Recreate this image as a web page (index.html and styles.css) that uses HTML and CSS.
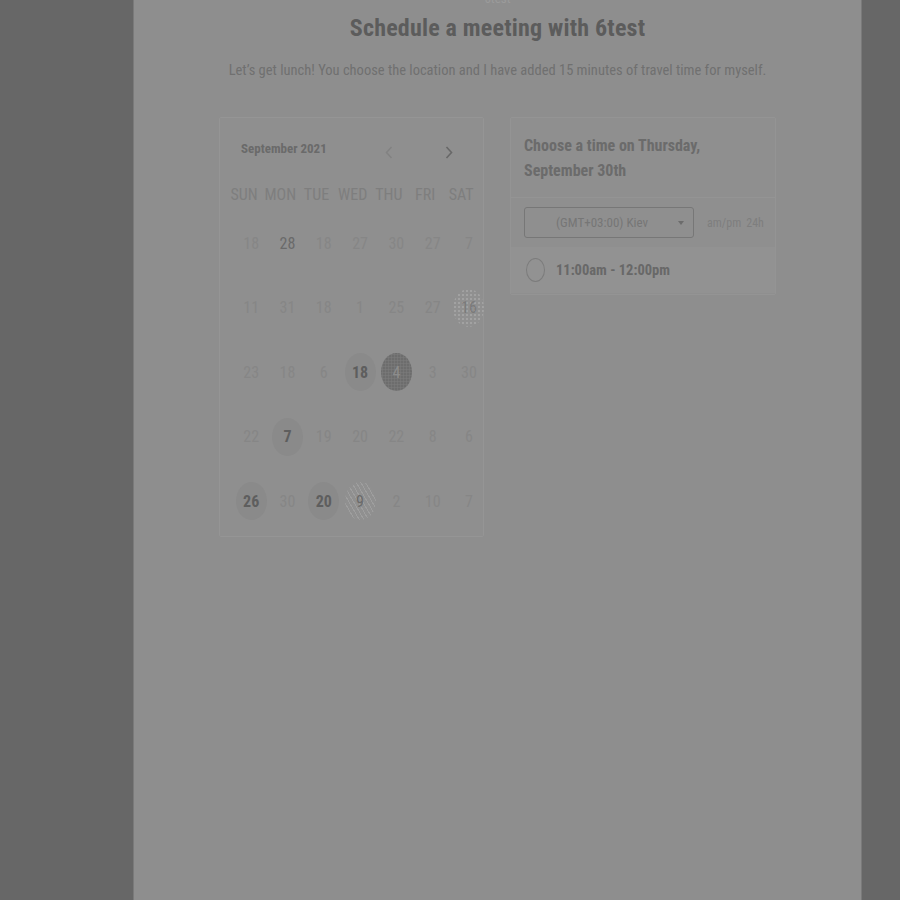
FILE: index.html
```html
<!DOCTYPE html>
<html>
<head>
<meta charset="utf-8">
<link rel="stylesheet" href="styles.css">
</head>
<body>
<div class="panel">
  <div class="top-name"><span>6test</span></div>
  <h1 class="title">Schedule a meeting with 6test</h1>
  <p class="subtitle">Let’s get lunch! You choose the location and I have added 15 minutes of travel time for myself.</p>

  <div class="row">
    <div class="cal">
      <div class="cal-head">
        <span class="month">September 2021</span>
        <div class="cal-nav">
          <svg class="arrow prev" width="8" height="13" viewBox="0 0 8 13"><path d="M6.5 1 L1.5 6.5 L6.5 12" fill="none" stroke="currentColor" stroke-width="1.5"/></svg>
          <svg class="arrow next" width="8" height="13" viewBox="0 0 8 13"><path d="M1.5 1 L6.5 6.5 L1.5 12" fill="none" stroke="currentColor" stroke-width="1.6"/></svg>
        </div>
      </div>
      <div class="dows">
        <span>Sun</span><span>Mon</span><span>Tue</span><span>Wed</span><span>Thu</span><span>Fri</span><span>Sat</span>
      </div>
      <div class="dates">
        <span class="d">18</span><span class="d strong">28</span><span class="d">18</span><span class="d">27</span><span class="d">30</span><span class="d">27</span><span class="d">7</span>
        <span class="d">11</span><span class="d">31</span><span class="d">18</span><span class="d">1</span><span class="d">25</span><span class="d">27</span><span class="d"><b class="dot dotted">16</b></span>
        <span class="d">23</span><span class="d">18</span><span class="d">6</span><span class="d"><b class="dot">18</b></span><span class="d"><b class="dot dark">4</b></span><span class="d">3</span><span class="d">30</span>
        <span class="d">22</span><span class="d"><b class="dot">7</b></span><span class="d">19</span><span class="d">20</span><span class="d">22</span><span class="d">8</span><span class="d">6</span>
        <span class="d"><b class="dot">26</b></span><span class="d">30</span><span class="d"><b class="dot">20</b></span><span class="d"><b class="dot striped">9</b></span><span class="d">2</span><span class="d">10</span><span class="d">7</span>
      </div>
    </div>

    <div class="times">
      <div class="times-head">Choose a time on Thursday, September 30th</div>
      <div class="times-body">
        <div class="tz-row">
          <div class="select"><span>(GMT+03:00) Kiev</span><i class="caret"></i></div>
          <div class="fmt"><span>am/pm</span><span>24h</span></div>
        </div>
        <div class="slot">
          <i class="radio"></i>
          <span class="slot-text">11:00am - 12:00pm</span>
        </div>
      </div>
    </div>
  </div>
</div>
</body>
</html>
```

FILE: styles.css
```css
* { box-sizing: border-box; }
html, body {
  margin: 0;
  padding: 0;
  background: #676767;
  font-family: "Roboto Condensed", Roboto, sans-serif;
}
.panel {
  margin-left: 133px;
  width: 729px;
  min-height: 900px;
  background: #8e8e8e;
  border-left: 1px solid #7a7a7a;
  border-right: 1px solid #7a7a7a;
}
.top-name {
  height: 5px;
  overflow: hidden;
  text-align: center;
}
.top-name span {
  display: block;
  font-size: 13px;
  line-height: 13px;
  margin-top: -8px;
  color: #9b9b9b;
}
.title {
  margin: 8px 0 0;
  font-size: 24px;
  line-height: 30px;
  font-weight: 700;
  letter-spacing: 0.2px;
  text-align: center;
  color: #5c5c5c;
}
.subtitle {
  margin: 18px 0 0;
  font-size: 14.5px;
  line-height: 20px;
  text-align: center;
  color: #707070;
}
.row {
  display: flex;
  justify-content: center;
  align-items: flex-start;
  gap: 26px;
  margin-top: 36px;
}
.cal {
  width: 265px;
  height: 420px;
  border: 1px solid #959595;
  border-radius: 2px;
  background: #8f8f8f;
}
.cal-head {
  display: flex;
  align-items: center;
  height: 18px;
  margin-top: 21px;
  padding-left: 21px;
}
.month {
  font-size: 13px;
  font-weight: 700;
  color: #6a6a6a;
}
.cal-nav {
  margin-left: auto;
  display: flex;
  gap: 52px;
  padding-right: 30px;
  margin-top: 8px;
}
.arrow { display: block; }
.arrow.prev { color: #828282; }
.arrow.next { color: #686868; }
.dows {
  display: grid;
  grid-template-columns: repeat(7, 36.2px);
  margin: 28px 0 0 6px;
  line-height: 20px;
  font-size: 16px;
  text-transform: uppercase;
  text-align: center;
  color: #7e7e7e;
}
.dates {
  display: grid;
  grid-template-columns: repeat(7, 36.3px);
  grid-auto-rows: 64.5px;
  margin: 6px 0 0 13px;
}
.d {
  display: flex;
  align-items: center;
  justify-content: center;
  font-size: 16px;
  color: #868686;
}
.d.strong { color: #6a6a6a; }
.dot {
  display: flex;
  align-items: center;
  justify-content: center;
  width: 31px;
  height: 38px;
  border-radius: 50%;
  background: #8a8a8a;
  color: #5e5e5e;
  font-weight: 700;
}
.dot.dark {
  background: #6d6d6d;
  background-image: radial-gradient(#797979 0.8px, transparent 1.3px);
  background-size: 3px 3px;
  color: #8c8c8c;
  font-weight: 400;
}
.dot.dotted {
  background: #909090;
  background-image: radial-gradient(#a2a2a2 0.8px, transparent 1.4px);
  background-size: 4px 4px;
  color: #7a7a7a;
  font-weight: 400;
}
.dot.striped {
  background: #909090;
  background-image: repeating-linear-gradient(60deg, #9e9e9e 0 1px, transparent 1px 4px);
  color: #6a6a6a;
  font-weight: 400;
}
.times {
  width: 266px;
  border: 1px solid #949494;
  border-radius: 2px;
  background: #8f8f8f;
  padding-bottom: 1px;
}
.times-head {
  padding: 15px 20px 14px 13px;
  font-size: 16px;
  line-height: 25px;
  font-weight: 700;
  color: #6b6b6b;
  border-bottom: 1px solid #949494;
}
.times-body {
  padding: 9px 0 0;
}
.tz-row {
  display: flex;
  align-items: center;
  padding-left: 13px;
}
.select {
  position: relative;
  width: 170px;
  height: 31px;
  border: 1px solid #777;
  border-radius: 3px;
  display: flex;
  align-items: center;
  padding-left: 31px;
  font-size: 13px;
  color: #767676;
}
.caret {
  position: absolute;
  right: 9px;
  top: 13px;
  width: 0;
  height: 0;
  border-left: 3.5px solid transparent;
  border-right: 3.5px solid transparent;
  border-top: 4px solid #6c6c6c;
}
.fmt {
  display: flex;
  gap: 5px;
  margin-left: 13px;
  font-size: 12px;
  color: #7e7e7e;
}
.slot {
  display: flex;
  align-items: center;
  height: 46px;
  margin-top: 9px;
  padding-left: 15px;
  background: #929292;
}
.radio {
  width: 19px;
  height: 24px;
  border: 1.5px solid #7c7c7c;
  border-radius: 50%;
}
.slot-text {
  margin-left: 11px;
  font-size: 14.5px;
  font-weight: 700;
  color: #686868;
}
```
